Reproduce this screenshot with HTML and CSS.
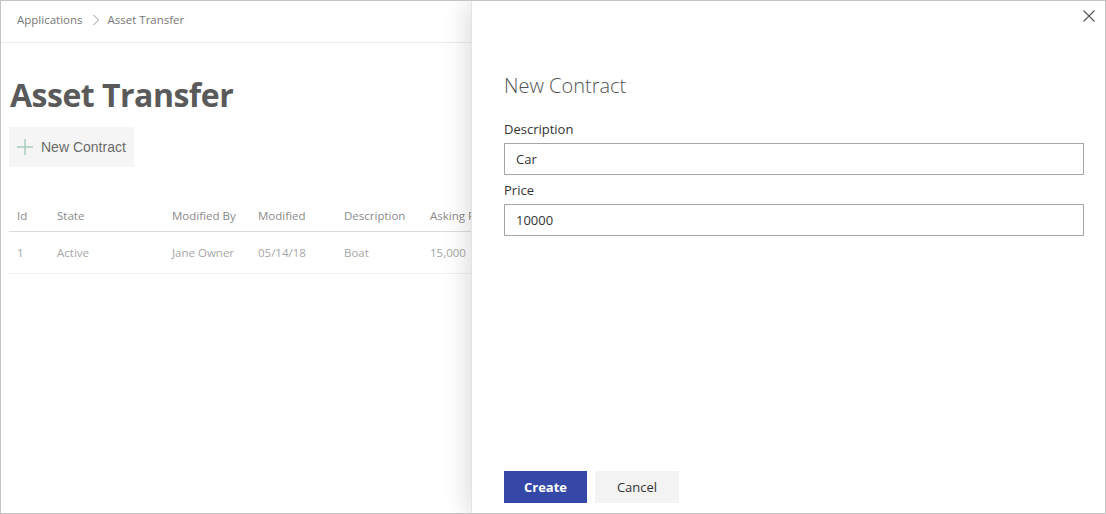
FILE: index.html
```html
<!DOCTYPE html>
<html>
<head>
<meta charset="utf-8">
<link rel="stylesheet" href="styles.css">
</head>
<body>
<div class="frame">
  <div class="page">
    <div class="breadcrumb">
      <span class="crumb">Applications</span>
      <svg class="chev" width="8" height="12" viewBox="0 0 8 12"><path d="M1.5 1 L6.5 6 L1.5 11" fill="none" stroke="#999" stroke-width="1"/></svg>
      <span class="crumb">Asset Transfer</span>
    </div>
    <div class="content">
      <h1 class="title">Asset Transfer</h1>
      <div class="toolbar">
        <button class="new-btn">
          <svg class="plus" width="16" height="16" viewBox="0 0 16 16"><path d="M8 0 V16 M0 8 H16" stroke="#a6ccb8" stroke-width="1.4"/></svg>
          <span>New Contract</span>
        </button>
      </div>
      <div class="table">
        <div class="row head">
          <div class="c c-id">Id</div>
          <div class="c c-state">State</div>
          <div class="c c-by">Modified By</div>
          <div class="c c-mod">Modified</div>
          <div class="c c-desc">Description</div>
          <div class="c c-ask">Asking Price</div>
        </div>
        <div class="row body">
          <div class="c c-id">1</div>
          <div class="c c-state">Active</div>
          <div class="c c-by">Jane Owner</div>
          <div class="c c-mod">05/14/18</div>
          <div class="c c-desc">Boat</div>
          <div class="c c-ask">15,000</div>
        </div>
      </div>
    </div>
  </div>
  <div class="panel">
    <div class="panel-top">
      <svg class="close" width="12" height="12" viewBox="0 0 12 12"><path d="M0.5 0.5 L11.5 11.5 M11.5 0.5 L0.5 11.5" stroke="#555" stroke-width="1.1"/></svg>
    </div>
    <div class="panel-body">
      <h2 class="panel-title">New Contract</h2>
      <label class="label">Description</label>
      <div class="input">Car</div>
      <label class="label">Price</label>
      <div class="input">10000</div>
    </div>
    <div class="panel-foot">
      <button class="btn primary">Create</button>
      <button class="btn secondary">Cancel</button>
    </div>
  </div>
</div>
</body>
</html>
```
FILE: styles.css
```css
* { box-sizing: border-box; }
html, body { margin: 0; padding: 0; background: #fff; }
body { font-family: "Open Sans", "Noto Sans", sans-serif; }
.frame {
  width: 1106px;
  height: 514px;
  border: 1px solid #c4c4c4;
  position: relative;
  overflow: hidden;
  display: flex;
}
.page { flex: 1; }
.breadcrumb {
  height: 42px;
  border-bottom: 1px solid #ececec;
  display: flex;
  align-items: center;
  padding-left: 16px;
  gap: 7px;
  font-size: 11.5px;
  color: #777;
  padding-bottom: 4px;
}
.chev { margin: 0 1px 0 2px; }
.content { padding: 0 8px; }
.title {
  margin: 32px 0 0 1px;
  font-size: 32px;
  font-weight: 700;
  color: #5a5a5a;
  line-height: 40px;
  letter-spacing: -0.5px;
}
.toolbar { margin-top: 12px; }
.new-btn {
  border: none;
  background: #f5f5f5;
  height: 40px;
  width: 125px;
  display: flex;
  align-items: center;
  padding: 0 0 0 8px;
  gap: 8px;
  font-family: "Liberation Sans", Arial, sans-serif;
  font-size: 14px;
  color: #6b6b6b;
}
.table { margin-top: 33px; width: 470px; overflow: hidden; }
.row { display: flex; align-items: center; }
.row.head { height: 32px; border-bottom: 1px solid #dcdcdc; color: #8a8a8a; font-size: 11.5px; }
.row.body { height: 42px; border-bottom: 1px solid #f0f0f0; color: #a6a6a6; font-size: 11.5px; }
.c { padding-left: 8px; white-space: nowrap; flex-shrink: 0; }
.c-id { width: 40px; }
.c-state { width: 115px; }
.c-by { width: 86px; }
.c-mod { width: 86px; }
.c-desc { width: 86px; }
.c-ask { width: 80px; }
.panel {
  position: absolute;
  top: 0;
  right: 0;
  bottom: 0;
  width: 634px;
  background: #fff;
  box-shadow: -6px 0 22px rgba(0,0,0,0.12);
  border-left: 1px solid #e4e4e4;
  display: flex;
  flex-direction: column;
}
.panel-top { height: 44px; display: flex; justify-content: flex-end; padding: 9px 10px 0 0; }
.panel-body { flex: 1; padding: 0 21px 0 32px; display: flex; flex-direction: column; }
.panel-title {
  margin: 26px 0 19px 0;
  font-size: 20px;
  font-weight: 300;
  color: #555;
  line-height: 30px;
}
.label { font-size: 13px; color: #333; line-height: 18px; margin-bottom: 5px; }
.input {
  height: 32px;
  border: 1px solid #a6a6a6;
  padding-left: 11px;
  font-size: 13px;
  color: #333;
  display: flex;
  align-items: center;
  margin-bottom: 6px;
}
.panel-foot { padding: 0 0 10px 32px; display: flex; gap: 8px; }
.btn {
  height: 32px;
  border: none;
  font-family: "Open Sans", "Noto Sans", sans-serif;
  font-size: 13px;
}
.btn.primary { width: 83px; background: #3547a7; color: #fff; font-weight: 700; }
.btn.secondary { width: 84px; background: #f3f3f3; color: #333; }
```
